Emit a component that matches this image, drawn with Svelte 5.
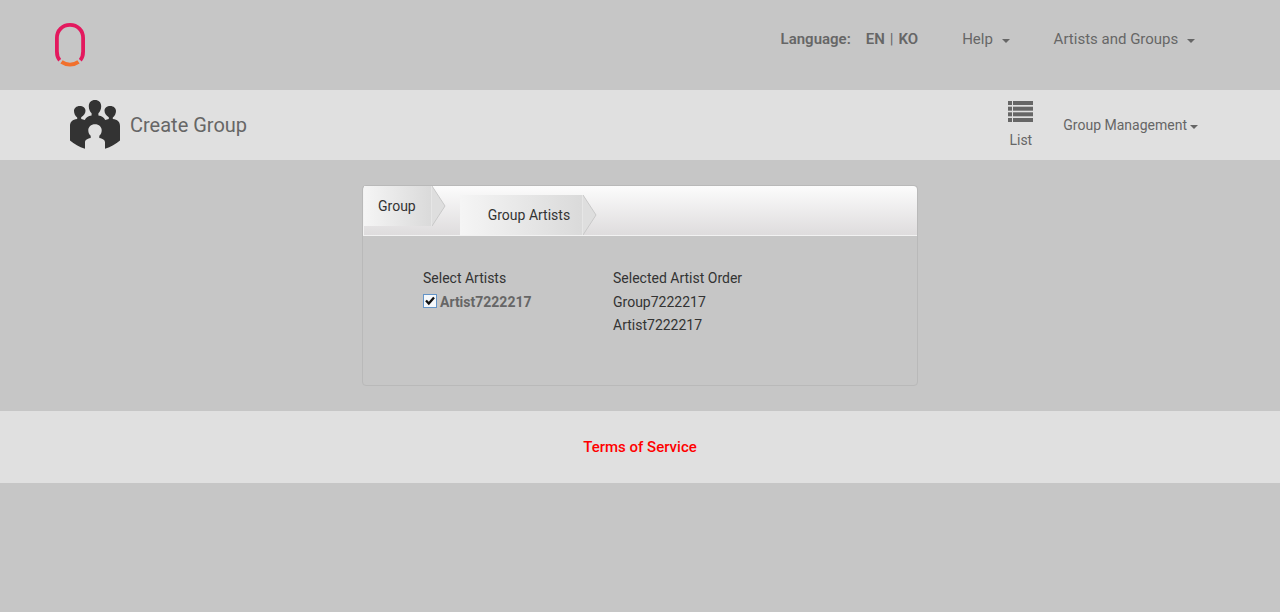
<script>
  const tabs = [{ label: 'Group' }, { label: 'Group Artists' }];
  let current = $state('Group Artists');
  let selected = $state(true);
  const order = $derived(selected ? ['Group7222217', 'Artist7222217'] : ['Group7222217']);
</script>

<header class="top">
  <a class="logo" href="#home" aria-label="Home">
    <svg width="30" height="44" viewBox="0 0 30 44" fill="none" stroke-width="3.8">
      <path d="M4.7 37.2C2.7 35 1.9 32.2 1.9 28.5V15C1.9 7.4 7.4 1.9 15 1.9S28.1 7.4 28.1 15v13.5c0 3.700-.8 6.500-2.800 8.700" stroke="#e3195e" />
      <path d="M6.500 38.900c4.900 3.500 12.100 3.500 17 0" stroke="#f1702c" />
    </svg>
  </a>
  <nav class="menu">
    <div class="language">
      <span class="caption">Language:</span>
      <a href="#en">EN</a><span class="bar">|</span><a href="#ko">KO</a>
    </div>
    <button class="help">Help <span class="caret"></span></button>
    <button>Artists and Groups <span class="caret"></span></button>
  </nav>
</header>

<section class="title">
  <svg class="people" width="50" height="50" viewBox="0 0 50 50" fill="#333">
    <path d="M25 0c3.800 0 6.200 2.500 6.200 6.200 0 3-1.200 5.500-2.800 7.100v2.200c3.500.5 5.600 2 6.800 4.600 1.100-.7 2.300-1 3.600-1.200v-1.600C36 15.500 34.500 13 34.500 10.800 34.500 7.800 37 6 40.300 6S46 8.200 46 11c0 2.500-1.300 5-3.200 6.500V19c4.700.6 7.200 2.800 7.200 7v14.500c-4.300 3.700-9 6.500-15 8.200v-6c0-2.400-1.600-4-5.700-4.700v-2.200c1.500-1.200 2.400-3.200 2.400-5.500 0-3.300-2.700-6-6.700-6s-6.700 2.700-6.700 6c0 2.300.9 4.300 2.400 5.500V38c-4.100.7-5.700 2.300-5.700 4.700v6C9 47 4.300 44.200 0 40.500V26c0-4.200 2.500-6.400 7.200-7v-1.500C5.300 16 4 13.500 4 11c0-2.800 2.400-5 5.700-5s5.800 1.800 5.800 4.800c0 2.200-1.500 4.700-4.300 6.500v1.600c1.300.2 2.500.5 3.600 1.200 1.200-2.600 3.300-4.100 6.800-4.600v-2.200c-1.600-1.600-2.800-4.100-2.800-7.100C18.800 2.500 21.200 0 25 0z" />
  </svg>
  <h1>Create Group</h1>
  <a class="list" href="#list">
    <svg width="25" height="21" viewBox="0 0 25 21" fill="#666">
      {#each [0, 5.7, 11.3, 17] as y}
        <rect x="0" {y} width="4" height="4" />
        <rect x="5" {y} width="20" height="4" />
      {/each}
    </svg>
    <span>List</span>
  </a>
  <button class="manage">Group Management<span class="caret"></span></button>
</section>

<main>
  <div class="panel">
    <div class="tabs" role="tablist">
      {#each tabs as tab, i}
        <button class="tab" class:second={i === 1} role="tab" aria-selected={current === tab.label} onclick={() => (current = tab.label)}>
          <span class="label">{tab.label}</span>
          <svg width="14" height="40" viewBox="0 0 14 40">
            <path d="M0 0L13 20 0 40z" fill="#dedede" />
            <path d="M0 0L13 20 0 40" fill="none" stroke="#c8c8c8" />
          </svg>
        </button>
      {/each}
    </div>
    <div class="content">
      <div class="column">
        <h2>Select Artists</h2>
        <label><input type="checkbox" bind:checked={selected} />Artist7222217</label>
      </div>
      <div class="column">
        <h2>Selected Artist Order</h2>
        <ul>
          {#each order as name}<li>{name}</li>{/each}
        </ul>
      </div>
    </div>
  </div>
</main>

<footer><a href="#terms">Terms of Service</a></footer>

<style>
  :global(body) {
    margin: 0;
    background: #c6c6c6;
    color: #333;
    font: 14px/20px Roboto, "Liberation Sans", sans-serif;
  }
  a { color: inherit; text-decoration: none; }
  button {
    border: 0;
    padding: 0;
    background: none;
    color: inherit;
    font: inherit;
    cursor: pointer;
  }
  .top {
    display: flex;
    justify-content: space-between;
    align-items: flex-start;
    height: 90px;
    padding: 0 85px 0 55px;
    box-sizing: border-box;
    color: #666;
    font-size: 15px;
  }
  .logo { display: block; padding-top: 23px; }
  .logo svg { display: block; }
  .menu { display: flex; padding-top: 29px; gap: 44px; }
  .language { display: flex; font-weight: 600; }
  .caption { margin-right: 15px; }
  .bar { margin: 0 5px; font-weight: 400; }
  .caret {
    display: inline-block;
    border: 4px solid transparent;
    border-top-color: currentColor;
    border-bottom: 0;
    margin-left: 5px;
    vertical-align: 1px;
  }
  .title {
    display: flex;
    align-items: center;
    height: 70px;
    padding: 0 82px 0 70px;
    background: #e0e0e0;
    color: #666;
  }
  h1 { margin: 0 auto 0 10px; font-size: 20px; font-weight: 400; line-height: 24px; }
  .list { display: flex; flex-direction: column; align-items: center; gap: 8px; margin-right: 30px; }
  .manage .caret { margin-left: 3px; }
  main { padding: 25px 0; }
  .panel {
    max-width: 554px;
    margin: 0 auto;
    border: 1px solid #b9b9b9;
    border-radius: 4px;
  }
  .tabs {
    display: flex;
    align-items: flex-start;
    height: 50px;
    box-sizing: border-box;
    border-bottom: 1px solid #f2f2f2;
    border-left: 1px solid #f2f2f2;
    border-radius: 4px 4px 0 0;
    background: linear-gradient(#fcfcfc, #dedcdd);
  }
  .tab { display: flex; margin-right: 14px; }
  .tab.second { margin-top: 9px; }
  .label {
    padding: 10px 15px 10px 14px;
    border-right: 1px solid #e6e6e6;
    background: linear-gradient(90deg, #f5f5f5, #dadada);
  }
  .second .label { padding: 10px 12px 10px 28px; }
  .content {
    display: grid;
    grid-template-columns: 110px 1fr;
    gap: 80px;
    min-height: 149px;
    box-sizing: border-box;
    padding: 32px 60px 0;
  }
  h2 { margin: 0 0 3px; font-size: 14px; font-weight: 400; line-height: 20px; }
  label { display: flex; align-items: center; gap: 3px; line-height: 23px; color: #666; font-weight: 700; }
  input {
    appearance: none;
    box-sizing: border-box;
    width: 14px;
    height: 14px;
    margin: 0 0 4px;
    border: 1px solid #6394c8;
    background: #f5f8fb;
  }
  input:checked {
    background: #f5f8fb url("data:image/svg+xml,%3Csvg xmlns='http://www.w3.org/2000/svg' viewBox='0 0 12 12'%3E%3Cpath d='M2 5.500L4.800 8.500 10 2.500' fill='none' stroke='%23111' stroke-width='2.300'/%3E%3C/svg%3E");
  }
  ul { margin: 0; padding: 0; list-style: none; line-height: 23px; }
  footer {
    display: flex;
    justify-content: center;
    padding: 26px 0;
    background: #e0e0e0;
    color: #f00;
    font-size: 15px;
    font-weight: 500;
  }
</style>
